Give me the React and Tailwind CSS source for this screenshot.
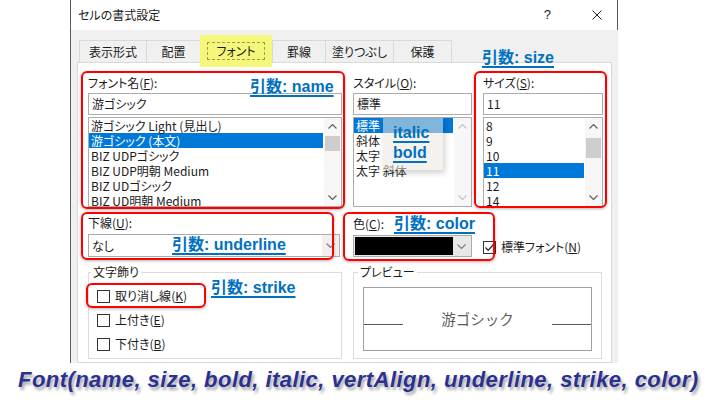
const Chevron = ({ up, color = '#606060' }) => (
  <svg width="9" height="5" viewBox="0 0 9 5">
    <polyline
      points={up ? '0.5,4.5 4.5,0.5 8.5,4.5' : '0.5,0.5 4.5,4.5 8.5,0.5'}
      fill="none"
      stroke={color}
      strokeWidth="1.2"
    />
  </svg>
);

const Scrollbar = ({ thumbTop, thumbH, disabled }) => (
  <div className="w-[17px] flex flex-col bg-[#f7f7f7]">
    <div className="h-[17px] flex items-center justify-center">
      <Chevron up color={disabled ? '#c4c4c4' : '#606060'} />
    </div>
    <div className="flex-1">
      {!disabled && (
        <div className="mx-[1px] bg-[#cdcdcd]" style={{ marginTop: thumbTop, height: thumbH }} />
      )}
    </div>
    <div className="h-[17px] flex items-center justify-center">
      <Chevron color={disabled ? '#c4c4c4' : '#606060'} />
    </div>
  </div>
);

const ListBox = ({ items, selected, thumbTop, thumbH, disabled, selRight }) => (
  <div className="mt-[2px] h-[90px] border border-[#acacac] bg-white flex overflow-hidden">
    <div className="flex-1 overflow-hidden">
      {items.map((t, i) => (
        <div
          key={t}
          className={
            i === selected
              ? 'h-[15px] leading-[15px] pl-[2px] bg-[#0078d7] text-white whitespace-nowrap'
              : 'h-[15px] leading-[15px] pl-[2px] whitespace-nowrap'
          }
          style={i === selected ? { marginRight: selRight } : undefined}
        >
          {t}
        </div>
      ))}
    </div>
    <Scrollbar thumbTop={thumbTop} thumbH={thumbH} disabled={disabled} />
  </div>
);

const Label = ({ text, k, tail = '):' }) => (
  <div className="h-[18px] leading-[16px] whitespace-nowrap">
    {text}(<span className="underline underline-offset-1">{k}</span>{tail}
  </div>
);

const CheckRow = ({ text, k }) => (
  <div className="h-[24px] flex items-center">
    <div className="ml-[8px] w-[13px] h-[13px] border border-[#333] bg-white" />
    <span className="ml-[5px]">
      {text}(<span className="underline underline-offset-1">{k}</span>)
    </span>
  </div>
);

const Tab = ({ w, children }) => (
  <div className={`${w} h-[22px] border-t border-l border-[#d9d9d9] flex items-center justify-center`}>
    {children}
  </div>
);

const Note = ({ className, children }) => (
  <div
    className={`absolute whitespace-nowrap leading-[20px] text-[16px] font-bold text-[#0070c0] underline decoration-[1.5px] underline-offset-[3px] font-['Liberation_Sans','Noto_Sans_CJK_JP',sans-serif] ${className}`}
  >
    {children}
  </div>
);

const RedBox = ({ className }) => (
  <div
    className={`absolute border-2 border-[#ff0000] rounded-[6px] shadow-[0_1px_3px_rgba(0,0,0,0.3)] ${className}`}
  />
);

export default function App() {
  return (
    <div className="relative w-[724px] h-[420px] overflow-hidden bg-white font-['Noto_Sans_CJK_JP',sans-serif] [font-feature-settings:'palt'] text-[12px] text-[#1a1a1a]">
      <div className="ml-[70px] w-[548px] h-[363px] border-l border-[#5a5a5a] bg-[#f0f0f0] flex flex-col">
        {/* title bar */}
        <div className="h-[30px] shrink-0 bg-white border-r border-[#5a5a5a] flex items-center pl-[7px]">
          <span>セルの書式設定</span>
          <span className="ml-auto text-[13px] font-['Liberation_Sans',sans-serif]">?</span>
          <svg className="ml-[41px] mr-[15px]" width="10" height="10" viewBox="0 0 10 10">
            <path d="M0.5 0.5 L9.5 9.5 M9.5 0.5 L0.5 9.5" stroke="#222" strokeWidth="1" />
          </svg>
        </div>

        {/* tabs */}
        <div className="h-[32px] shrink-0 flex items-end pl-[8px]">
          <Tab w="w-[67px]">表示形式</Tab>
          <Tab w="w-[54px]">配置</Tab>
          <div className="relative z-10 -mb-[5px] w-[72px] h-[32px] bg-[#f5f77a] flex items-center justify-center">
            <div className="border border-dashed border-[#9c9c52] px-[8px] leading-[16px]">フォント</div>
          </div>
          <Tab w="w-[53px]">罫線</Tab>
          <Tab w="w-[68px]">塗りつぶし</Tab>
          <div className="w-[59px] h-[22px] border-t border-l border-r border-[#d9d9d9] flex items-center justify-center">
            保護
          </div>
        </div>

        {/* panel */}
        <div className="flex-1 ml-[6px] mr-[6px] border border-[#d9d9d9] bg-white pl-[10px] pt-[12px]">
          <div className="flex gap-[11px]">
            <div className="w-[254px]">
              <Label text="フォント名" k="F" />
              <div className="h-[22px] border border-[#acacac] pl-[3px] leading-[20px]">游ゴシック</div>
              <ListBox
                items={['游ゴシック Light (見出し)', '游ゴシック (本文)', 'BIZ UDPゴシック', 'BIZ UDP明朝 Medium', 'BIZ UDゴシック', 'BIZ UD明朝 Medium']}
                selected={1}
                thumbTop={1}
                thumbH={15}
                selRight={1}
              />
            </div>
            <div className="w-[119px]">
              <Label text="スタイル" k="O" />
              <div className="h-[22px] border border-[#acacac] pl-[3px] leading-[20px]">標準</div>
              <ListBox items={['標準', '斜体', '太字', '太字 斜体']} selected={0} disabled selRight={1} />
            </div>
            <div className="w-[120px]">
              <Label text="サイズ" k="S" />
              <div className="h-[22px] border border-[#acacac] pl-[3px] leading-[20px]">11</div>
              <ListBox
                items={['8', '9', '10', '11', '12', '14']}
                selected={3}
                thumbTop={3}
                thumbH={20}
                selRight={1}
              />
            </div>
          </div>

          <div className="mt-[8px] flex">
            <div className="w-[252px]">
              <div className="h-[19px] leading-[16px]">
                下線(<span className="underline underline-offset-1">U</span>):
              </div>
              <div className="h-[23px] border border-[#acacac] flex">
                <div className="flex-1 pl-[3px] leading-[21px]">なし</div>
                <div className="w-[17px] bg-[#f0f0f0] flex items-center justify-center">
                  <Chevron color="#808080" />
                </div>
              </div>
            </div>
            <div className="ml-[13px] w-[119px]">
              <div className="h-[19px] leading-[18px]">
                色(<span className="underline underline-offset-1">C</span>):
              </div>
              <div className="mt-[1px] h-[22px] border border-[#acacac] bg-[#e8e8e8] flex p-[1px]">
                <div className="flex-1 bg-black" />
                <div className="w-[17px] flex items-center justify-center">
                  <Chevron color="#808080" />
                </div>
              </div>
            </div>
            <div className="ml-[11px] self-end h-[20px] flex items-center">
              <div className="w-[13px] h-[13px] border border-[#333] bg-white flex items-center justify-center">
                <svg width="11" height="11" viewBox="0 0 11 11">
                  <polyline points="1.5,5.5 4.2,8.3 9.8,2" fill="none" stroke="#222" strokeWidth="1.2" />
                </svg>
              </div>
              <span className="ml-[5px]">
                標準フォント(<span className="underline underline-offset-1">N</span>)
              </span>
            </div>
          </div>

          <div className="mt-[7px] flex gap-[11px]">
            <fieldset className="w-[254px] h-[95px] border border-[#dcdcdc]">
              <legend className="ml-[2px] px-[2px] leading-[16px]">文字飾り</legend>
              <div className="mt-[4px]">
                <CheckRow text="取り消し線" k="K" />
                <CheckRow text="上付き" k="E" />
                <CheckRow text="下付き" k="B" />
              </div>
            </fieldset>
            <fieldset className="w-[249px] h-[95px] border border-[#dcdcdc]">
              <legend className="ml-[4px] px-[2px] leading-[16px]">プレビュー</legend>
              <div className="ml-[9px] mt-[7px] w-[229px] h-[64px] border border-[#a0a0a0] flex items-center">
                <div className="mt-[10px] w-[39px] h-px bg-[#595959]" />
                <div className="flex-1 text-center text-[14.5px] text-[#5a5a5a] [font-feature-settings:normal]">
                  游ゴシック
                </div>
                <div className="mt-[10px] w-[39px] h-px bg-[#595959]" />
              </div>
            </fieldset>
          </div>
        </div>
      </div>

      <div className="mt-[4px] pl-[18px] whitespace-nowrap text-[22px] leading-[26px] font-bold italic tracking-[0.45px] text-[#2b3190] font-['Liberation_Sans',Arial,sans-serif] [text-shadow:2px_3px_3px_rgba(0,0,0,0.35)]">
        Font(name, size, bold, italic, vertAlign, underline, strike, color)
      </div>

      {/* annotations */}
      <RedBox className="left-[81px] top-[71px] w-[264px] h-[138px]" />
      <RedBox className="left-[474px] top-[71px] w-[133px] h-[137px]" />
      <RedBox className="left-[81px] top-[212px] w-[253px] h-[48px]" />
      <RedBox className="left-[343px] top-[212px] w-[152px] h-[49px]" />
      <RedBox className="left-[86px] top-[283px] w-[120px] h-[25px]" />

      <div className="absolute left-[383px] top-[118px] w-[60px] h-[52px] bg-[rgba(236,231,222,0.55)] shadow-[2px_3px_6px_rgba(0,0,0,0.18)]" />

      <Note className="left-[250px] top-[77px]">引数: name</Note>
      <Note className="left-[482px] top-[48px]">引数: size</Note>
      <Note className="left-[393px] top-[123px] leading-[19px]">
        italic
        <br />
        bold
      </Note>
      <Note className="left-[172px] top-[235px]">引数: underline</Note>
      <Note className="left-[394px] top-[214px]">引数: color</Note>
      <Note className="left-[211px] top-[278px]">引数: strike</Note>
    </div>
  );
}
